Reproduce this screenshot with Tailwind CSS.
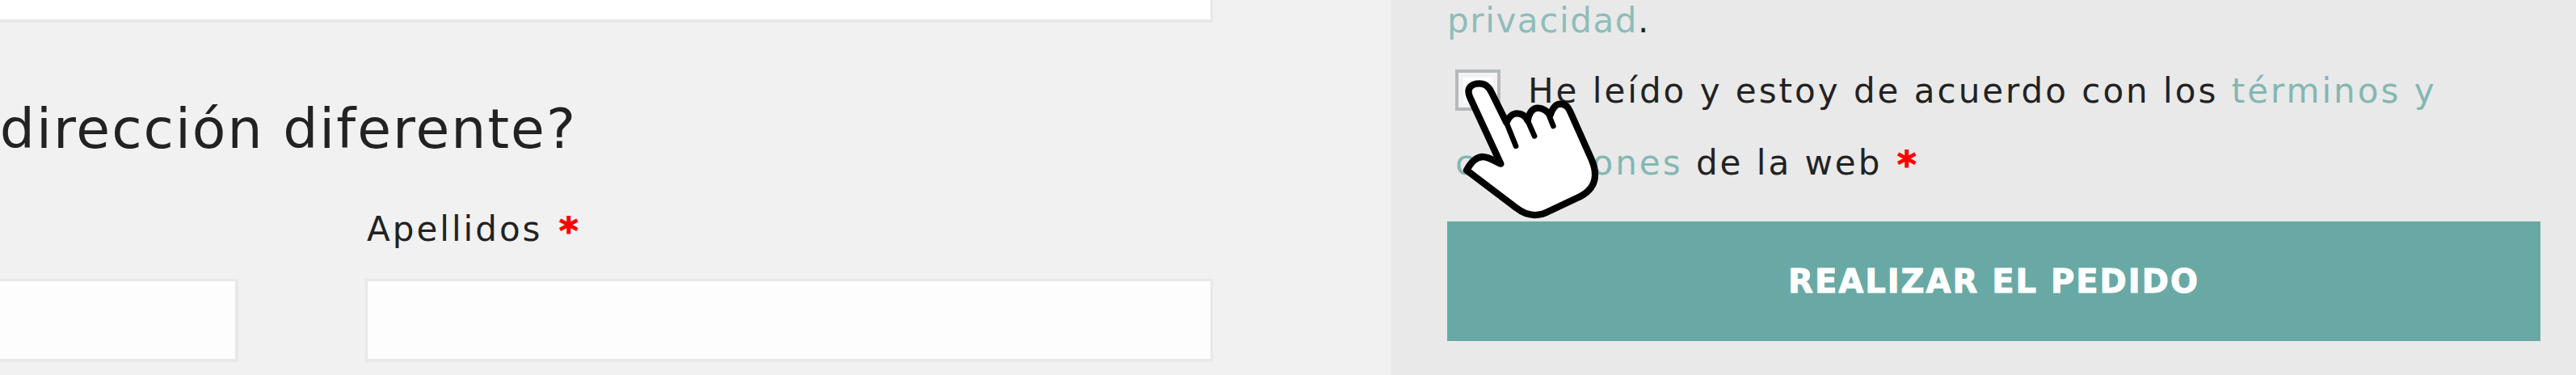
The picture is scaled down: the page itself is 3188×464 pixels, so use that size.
<!DOCTYPE html>
<html>
<head>
<meta charset="utf-8">
<script src="https://cdn.jsdelivr.net/npm/@tailwindcss/browser@4"></script>
</head>
<body class="m-0 bg-[#f1f1f1]">
<div class="relative flex h-[464px] w-[3188px] overflow-hidden font-['DejaVu_Sans',sans-serif] text-[#222]">
  <main class="w-[1721px] shrink-0 bg-[#f1f1f1]">
    <div class="h-[28px] w-[1501px] border-r-[3px] border-b-[4px] border-[#e8e8e8] bg-white"></div>
    <div class="mt-[82px] flex h-[100px] w-[714px] items-center justify-end overflow-hidden">
      <h3 class="shrink-0 whitespace-nowrap text-[68px] leading-[100px] font-normal tracking-[2px]">¿Enviar a una dirección diferente?</h3>
    </div>
    <div class="mt-[35px] grid w-[1501px] grid-cols-[295px_1049px] gap-x-[157px]">
      <div></div>
      <label class="h-[100px] pl-[2px] pt-[10px] text-[42px] leading-[58px] tracking-[3px]">Apellidos <span class="ml-[4px] align-[-4px] text-[46px] leading-[0] font-bold text-[#ff0000] [-webkit-text-stroke:1px_#ff0000]">*</span></label>
    </div>
    <div class="grid w-[1501px] grid-cols-[295px_1049px] gap-x-[157px]">
      <div class="h-[103px] border-t-[3px] border-r-[4px] border-b-[4px] border-[#e8e8e8] bg-[#fdfdfd]"></div>
      <div class="h-[103px] border-x-[3px] border-t-[3px] border-b-[4px] border-[#e8e8e8] bg-[#fdfdfd]"></div>
    </div>
  </main>
  <aside class="flex-1 bg-[#e9e9e9] pr-[44px] pl-[70px]">
    <p class="mt-[-10px] text-[42px] leading-[72px] tracking-[1.6px]"><a class="text-[#8fbdb9]">privacidad</a>.</p>
    <p class="mt-[6px] w-[1353px] pl-[10px] text-[42px] leading-[89px] tracking-[3px]">
      <span class="mr-[34px] inline-block h-[51px] w-[56px] border-[4px] border-[#b5b9bd] bg-white align-[-10px] shadow-[inset_0_0_0_6px_#f3f3f3]"></span>He leído y estoy de acuerdo con los <a class="text-[#84b7b3]">términos y condiciones</a> de la web <span class="ml-[2px] align-[-4px] text-[46px] leading-[0] font-bold text-[#ff0000] [-webkit-text-stroke:1px_#ff0000]">*</span>
    </p>
    <button class="mt-[28px] block h-[148px] w-[1353px] bg-[#69a9a5] text-center text-[40px] leading-[148px] font-bold tracking-[2px] text-white [-webkit-text-stroke:1px_white]">REALIZAR EL PEDIDO</button>
  </aside>
  <svg class="absolute top-[70px] left-[1760px]" width="260" height="210" viewBox="0 0 780 630" fill="none">
    <path d="M165 422 C185 385 205 372 225 372 C245 372 270 388 292 398 L178 152 C160 112 190 100 212 100 C232 100 248 112 257 132 L313 245 C322 222 338 211 352 211 C372 211 385 222 392 238 C398 205 412 191 430 191 C450 191 462 203 476 216 C486 188 498 176 512 176 C530 176 543 188 550 205 L628 380 C650 430 655 490 575 525 L475 572 C440 592 395 598 350 562 Z" fill="#fff" stroke="#000" stroke-width="25" stroke-linejoin="round"/>
    <path d="M313 245 L348 332 M392 238 L417 295 M470 215 L487 258" stroke="#000" stroke-width="20" stroke-linecap="round"/>
  </svg>
</div>
</body>
</html>
